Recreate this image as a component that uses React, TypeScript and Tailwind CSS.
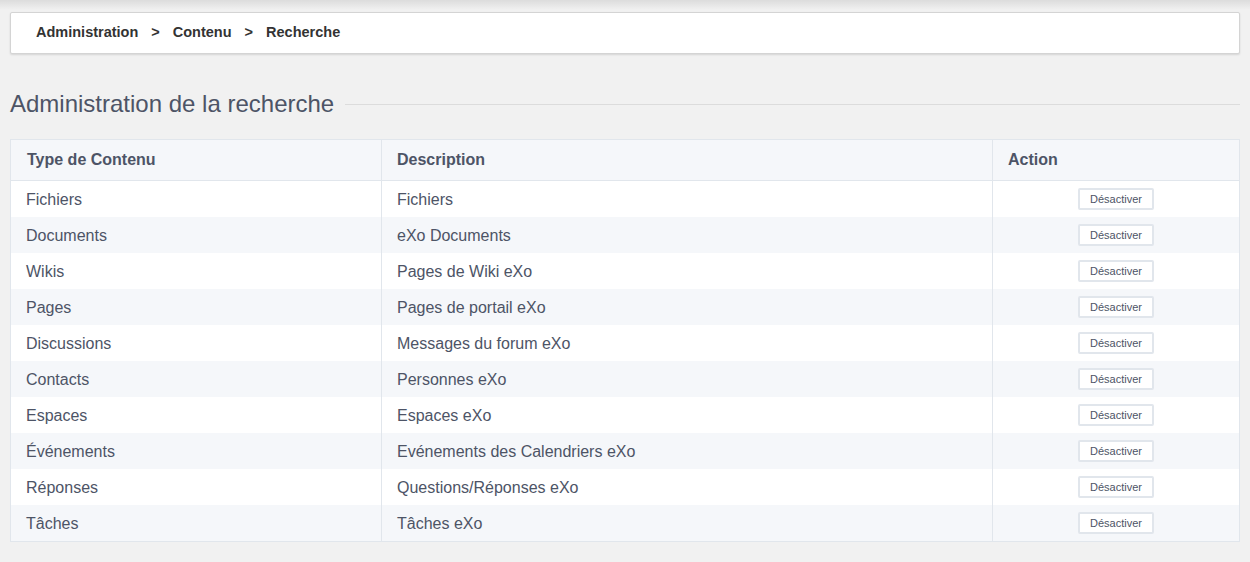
const rows = [
  { type: 'Fichiers', desc: 'Fichiers' },
  { type: 'Documents', desc: 'eXo Documents' },
  { type: 'Wikis', desc: 'Pages de Wiki eXo' },
  { type: 'Pages', desc: 'Pages de portail eXo' },
  { type: 'Discussions', desc: 'Messages du forum eXo' },
  { type: 'Contacts', desc: 'Personnes eXo' },
  { type: 'Espaces', desc: 'Espaces eXo' },
  { type: 'Événements', desc: 'Evénements des Calendriers eXo' },
  { type: 'Réponses', desc: 'Questions/Réponses eXo' },
  { type: 'Tâches', desc: 'Tâches eXo' },
]

function Breadcrumb() {
  return (
    <div className="mx-[10px] mt-[12px] flex h-[42px] items-center rounded-[2px] border border-[#d4d4d4] bg-white pl-[25px] text-[14.5px] font-bold text-[#333] shadow-[0_1px_2px_rgba(0,0,0,0.12)]">
      <span>Administration</span>
      <span className="px-[13px]">&gt;</span>
      <span>Contenu</span>
      <span className="px-[13px]">&gt;</span>
      <span>Recherche</span>
    </div>
  )
}

function App() {
  return (
    <div className="h-[562px] w-[1250px] bg-[#f1f1f1] font-['Liberation_Sans',Arial,sans-serif] text-[#4d5466]">
      <div className="h-[10px] bg-gradient-to-b from-[#dcdcdc] to-[#f1f1f1]" />
      <div className="-mt-[10px]">
        <Breadcrumb />
      </div>
      <div className="mx-[10px] mt-[36px] flex items-center">
        <h1 className="text-[24px] leading-[28px] text-[#4d5466]">Administration de la recherche</h1>
        <div className="ml-[11px] h-[1px] flex-1 bg-[#dcdcdc]" />
      </div>
      <div className="mx-[10px] mt-[21px] border border-[#e1e6ec]">
        <div className="flex h-[41px] items-center border-b border-[#e1e6ec] bg-[#f5f7fa] text-[16px] font-bold">
          <div className="flex h-full w-[371px] items-center border-r border-[#e1e6ec] pl-[16px]">Type de Contenu</div>
          <div className="flex h-full w-[611px] items-center border-r border-[#e1e6ec] pl-[15px]">Description</div>
          <div className="flex h-full flex-1 items-center pl-[15px]">Action</div>
        </div>
        {rows.map((r, i) => (
          <div key={r.type} className={`flex h-[36px] items-center text-[16px] ${i % 2 === 0 ? 'bg-white' : 'bg-[#f5f7fa]'}`}>
            <div className="flex h-full w-[371px] items-center border-r border-[#e1e6ec] pl-[15px] pt-[2px]">{r.type}</div>
            <div className="flex h-full w-[611px] items-center border-r border-[#e1e6ec] pl-[15px] pt-[2px]">{r.desc}</div>
            <div className="flex h-full flex-1 items-center justify-center">
              <button className="h-[22px] w-[76px] rounded-[2px] border-2 border-[#e1e6ec] bg-white pt-[1px] text-[11px] text-[#4d5466]">
                Désactiver
              </button>
            </div>
          </div>
        ))}
      </div>
    </div>
  )
}
export default App
